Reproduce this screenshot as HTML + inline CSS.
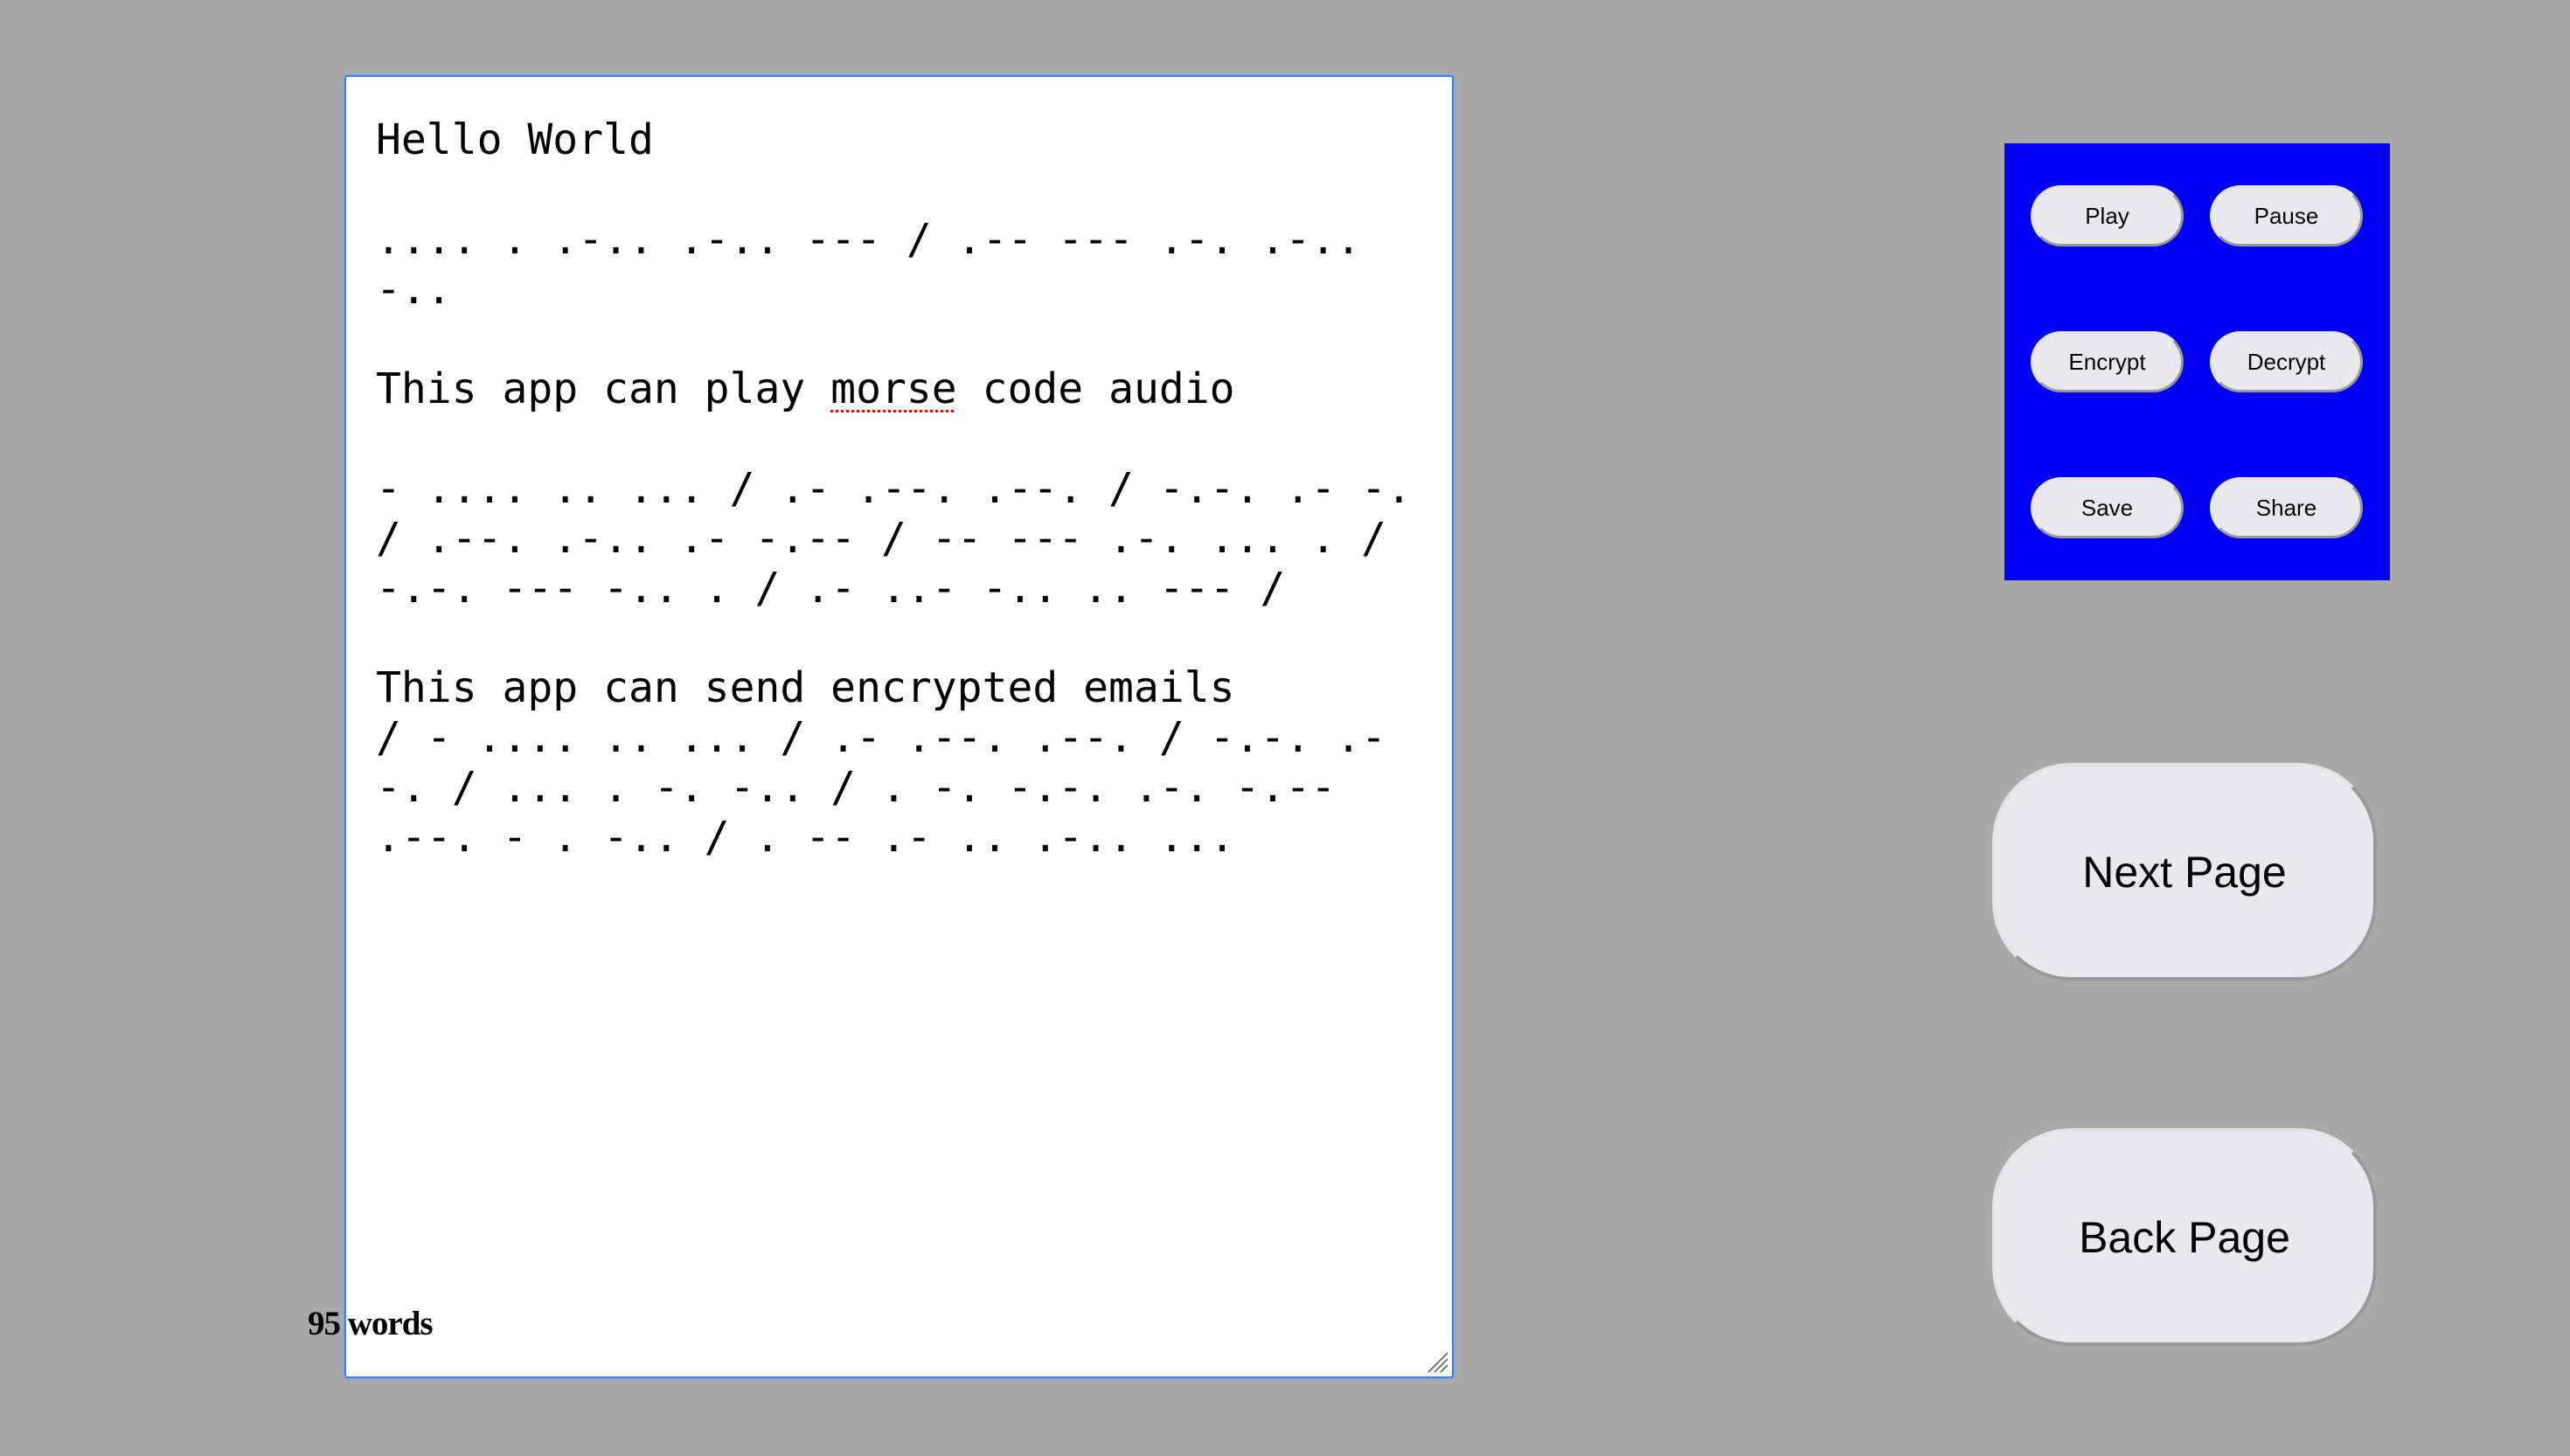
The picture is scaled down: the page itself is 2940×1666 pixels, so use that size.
<!DOCTYPE html>
<html><head><meta charset="utf-8"><style>
html,body{margin:0;padding:0}
body{width:2940px;height:1666px;background:#a9a9a9;position:relative;overflow:hidden;font-family:"Liberation Sans",sans-serif}
#ta{position:absolute;left:394px;top:86px;width:1265px;height:1487px;background:#fff;border:2px solid #3b7cf0;border-radius:4px;box-shadow:0 0 0 2px #8fa9cc;box-sizing:content-box}
#txt{position:absolute;left:34px;top:44px;margin:0;font-family:"DejaVu Sans Mono","Liberation Mono",monospace;font-size:48px;line-height:57px;color:#000;white-space:pre}
.sp{text-decoration:underline dotted #e00;text-decoration-thickness:3px;text-underline-offset:8px}
#grip{position:absolute;right:4px;bottom:4px;width:26px;height:26px}
#wc{position:absolute;left:352px;top:1492px;font-family:"Liberation Serif",serif;font-weight:bold;font-size:39px;letter-spacing:-1px;color:#000}
#panel{position:absolute;left:2293px;top:164px;width:441px;height:500px;background:#0000f2}
.b{position:absolute;width:175px;height:70px;box-sizing:border-box;background:#e9e9ed;border:3px solid;border-color:#e4e4e4 #999 #999 #e4e4e4;border-radius:35px;font-size:26px;display:flex;align-items:center;justify-content:center;color:#000}
.big{position:absolute;left:2279px;width:440px;height:249px;box-sizing:border-box;background:#e9e9ed;border:4px solid;border-color:#e4e4e4 #999 #999 #e4e4e4;border-radius:90px;font-size:50px;display:flex;align-items:center;justify-content:center;color:#000}
</style></head><body>
<div id="ta">
<pre id="txt">Hello World

.... . .-.. .-.. --- / .-- --- .-. .-..
-..

This app can play <span class="sp">morse</span> code audio

- .... .. ... / .- .--. .--. / -.-. .- -.
/ .--. .-.. .- -.-- / -- --- .-. ... . /
-.-. --- -.. . / .- ..- -.. .. --- /

This app can send encrypted emails
/ - .... .. ... / .- .--. .--. / -.-. .-
-. / ... . -. -.. / . -. -.-. .-. -.--
.--. - . -.. / . -- .- .. .-.. ...</pre>
<svg id="grip" viewBox="0 0 26 26"><path d="M25 3L3 25M25 10L10 25M25 17L17 25" stroke="#777" stroke-width="2"/></svg>
</div>
<div id="wc">95 words</div>
<div id="panel">
<div class="b" style="left:30px;top:48px">Play</div>
<div class="b" style="left:235px;top:48px">Pause</div>
<div class="b" style="left:30px;top:215px">Encrypt</div>
<div class="b" style="left:235px;top:215px">Decrypt</div>
<div class="b" style="left:30px;top:382px">Save</div>
<div class="b" style="left:235px;top:382px">Share</div>
</div>
<div class="big" style="top:873px">Next Page</div>
<div class="big" style="top:1291px">Back Page</div>
</body></html>
